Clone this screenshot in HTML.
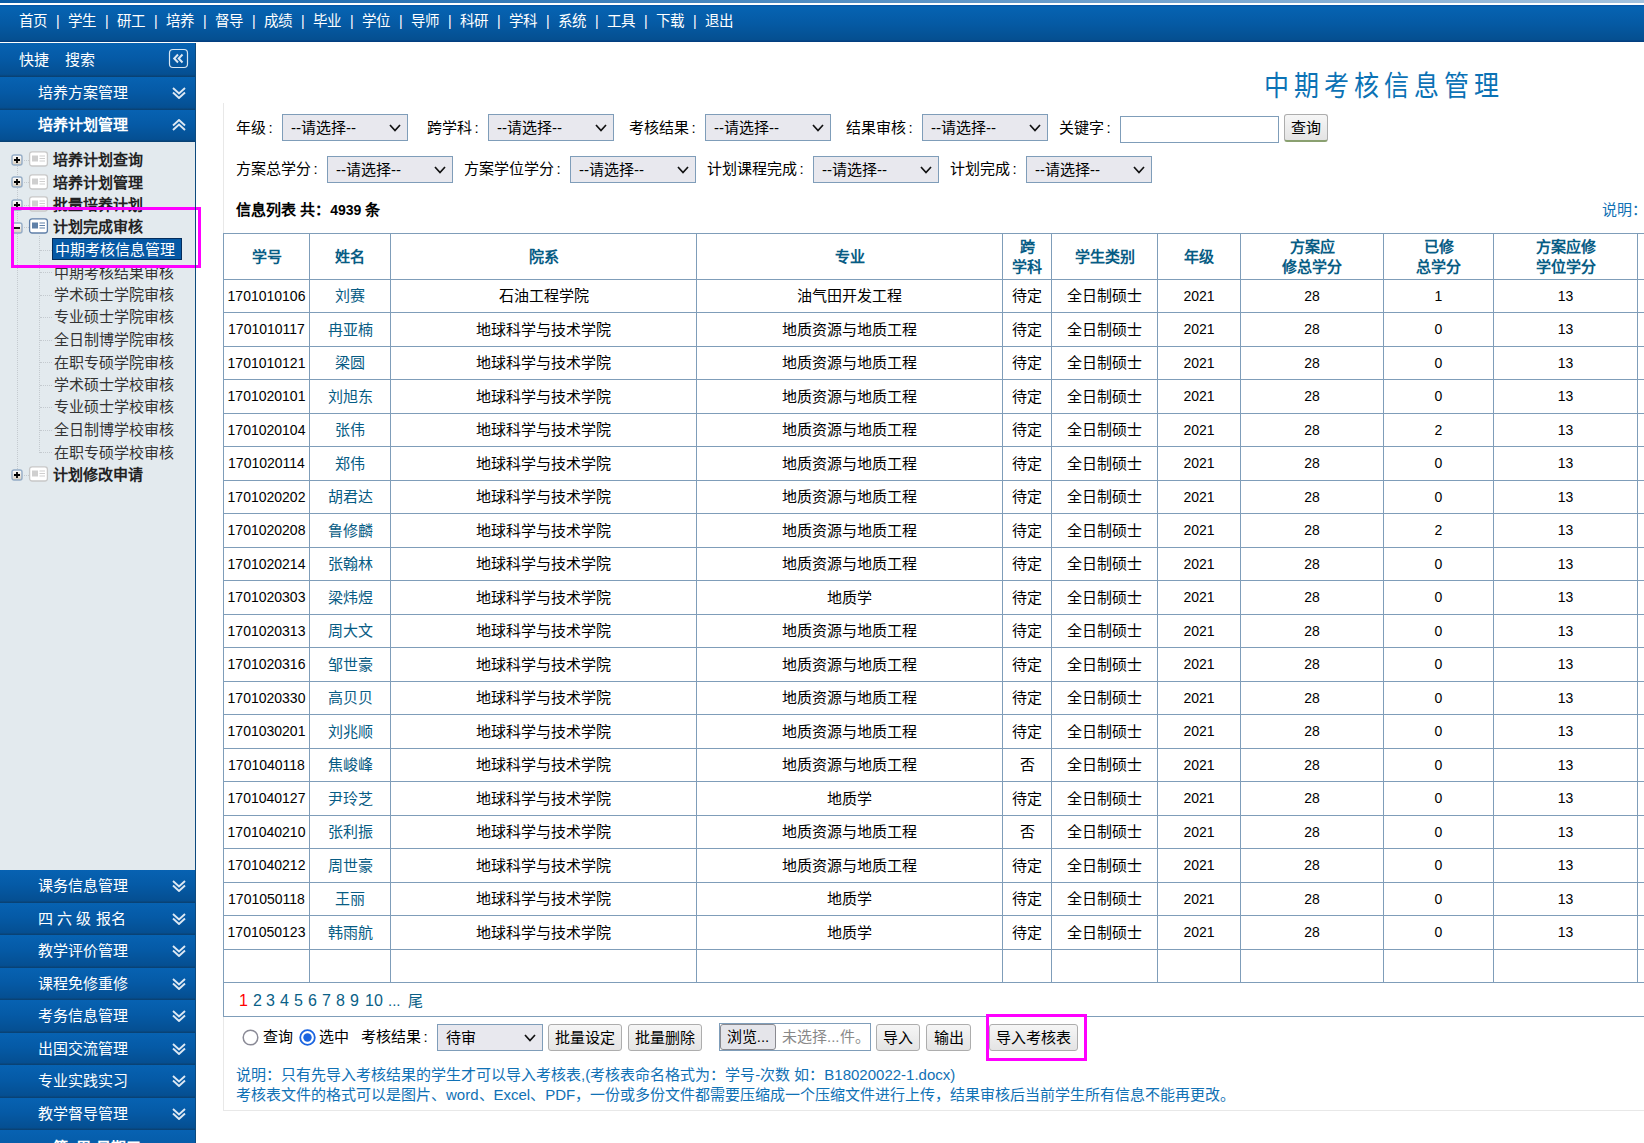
<!DOCTYPE html><html lang="zh-CN"><head><meta charset="utf-8"><title>中期考核信息管理</title><style>
*{box-sizing:border-box}
html,body{margin:0;padding:0}
body{width:1644px;height:1143px;overflow:hidden;position:relative;background:#fff;font-family:"Liberation Sans",sans-serif;font-size:14px;color:#000}
.abs{position:absolute}
#topstrip{left:0;top:0;width:1644px;height:3px;background:linear-gradient(90deg,#0a5ca6 0%,#3f82bd 40%,#7aa8d2 75%,#a3c2de 100%)}
#topwhite{left:0;top:3px;width:1644px;height:2px;background:#fff}
#topbar{left:0;top:5px;width:1644px;height:37px;background:linear-gradient(#0454a6 0,#0663b2 2px,#055aa4 50%,#054f90 35px,#033f80 36px,#033f80 37px)}
#nav{left:19px;top:4px;height:36px;line-height:34px;color:#fff;font-size:14.5px;white-space:nowrap}
#nav span.it{position:absolute;top:0}
#nav span.sep{position:absolute;top:0;font-size:14px}
.side{left:0;width:196px}
.mh{position:absolute;left:0;width:195px;background:linear-gradient(#0762b2 0%,#055aa6 45%,#054f92 92%,#0a3f6e 100%);color:#fff;font-size:15px}
.mh .t{position:absolute;left:38px;top:0;white-space:nowrap}
.chev{position:absolute;left:172px;width:14px;height:12px}
#tree{left:0;top:142px;width:195px;height:728px;background:#e3eaee}
#sideborder{left:195px;top:43px;width:1px;height:1100px;background:#0d4a7e}
.tn{position:absolute;left:53px;font-weight:bold;font-size:15px;color:#222;white-space:nowrap}
.ts{position:absolute;left:54px;font-size:15px;color:#333;white-space:nowrap}
.cell{position:absolute;text-align:center;white-space:nowrap}
.hl{position:absolute;background:#7f9db9}
.hd{color:#075c84;font-weight:bold;font-size:15px;line-height:20px}
.nm{color:#075c84;font-size:15px}
.cj{font-size:15px}
.sel{position:absolute;height:27px;background:#e8e8ee;border:1px solid #7f9db9;font-size:15px;line-height:25px;padding-left:8px;color:#000;white-space:nowrap}
.sel svg{position:absolute;right:6px;top:9px}
.lbl{position:absolute;font-size:15px;white-space:nowrap;line-height:20px}
.btn{position:absolute;height:27px;border:1px solid #adadad;border-radius:3px;background:linear-gradient(#f6f6f6,#e4e4e4);font-size:15px;line-height:25px;text-align:center;white-space:nowrap}
.mag{position:absolute;border:3px solid #f0f;}
</style></head><body>
<div class="abs" id="topstrip"></div><div class="abs" id="topwhite"></div><div class="abs" id="topbar"></div>
<div class="abs" id="nav">
<span class="it" style="left:0px">首页</span>
<span class="sep" style="left:37px">|</span>
<span class="it" style="left:49px">学生</span>
<span class="sep" style="left:86px">|</span>
<span class="it" style="left:98px">研工</span>
<span class="sep" style="left:135px">|</span>
<span class="it" style="left:147px">培养</span>
<span class="sep" style="left:184px">|</span>
<span class="it" style="left:196px">督导</span>
<span class="sep" style="left:233px">|</span>
<span class="it" style="left:245px">成绩</span>
<span class="sep" style="left:282px">|</span>
<span class="it" style="left:294px">毕业</span>
<span class="sep" style="left:331px">|</span>
<span class="it" style="left:343px">学位</span>
<span class="sep" style="left:380px">|</span>
<span class="it" style="left:392px">导师</span>
<span class="sep" style="left:429px">|</span>
<span class="it" style="left:441px">科研</span>
<span class="sep" style="left:478px">|</span>
<span class="it" style="left:490px">学科</span>
<span class="sep" style="left:527px">|</span>
<span class="it" style="left:539px">系统</span>
<span class="sep" style="left:576px">|</span>
<span class="it" style="left:588px">工具</span>
<span class="sep" style="left:625px">|</span>
<span class="it" style="left:637px">下载</span>
<span class="sep" style="left:674px">|</span>
<span class="it" style="left:686px">退出</span>
</div>
<div class="mh" style="top:43px;height:34px"><span class="t" style="left:19px;line-height:33px;font-size:15px">快捷</span><span class="t" style="left:65px;line-height:33px;font-size:15px">搜索</span><svg style="position:absolute;left:168px;top:5px" width="21" height="21" viewBox="0 0 21 21"><rect x="1.5" y="1.5" width="18" height="18" rx="3.5" fill="none" stroke="#d8e6f2" stroke-width="1.2"/><path d="M10 6.5 L6.2 10.5 L10 14.5 M14.5 6.5 L10.7 10.5 L14.5 14.5" fill="none" stroke="#dde8f3" stroke-width="2"/></svg></div>
<div class="mh" style="top:77px;height:33px"><span class="t" style="line-height:31px">培养方案管理</span><div class="chev" style="top:8px"><svg width="14" height="12" viewBox="0 0 14 12"><path d="M1 1 L7 6.5 L13 1 M1 5.5 L7 11 L13 5.5" fill="none" stroke="#dde8f3" stroke-width="1.9"/></svg></div></div>
<div class="mh" style="top:110px;height:32px"><span class="t" style="line-height:29px;font-weight:bold">培养计划管理</span><div class="chev" style="top:7px"><svg width="14" height="12" viewBox="0 0 14 12"><path d="M1 11 L7 5.5 L13 11 M1 6.5 L7 1 L13 6.5" fill="none" stroke="#dde8f3" stroke-width="1.9"/></svg></div></div>
<div class="abs" id="tree"></div>
<div class="abs" style="left:17px;top:166px;width:1px;height:303px;border-left:1px dotted #c4cacf"></div>
<div class="abs" style="left:39px;top:236px;width:1px;height:217px;border-left:1px dotted #c4cacf"></div>
<svg class="abs" style="left:11px;top:154px" width="12" height="12" viewBox="0 0 12 12"><defs><linearGradient id="pg" x1="0" y1="0" x2="0" y2="1"><stop offset="0" stop-color="#fff"/><stop offset="1" stop-color="#d8cfc0"/></linearGradient></defs><rect x="1" y="1" width="10" height="10" rx="2" fill="url(#pg)" stroke="#94acc6" stroke-width="1.4"/><path d="M3 6 H9 M6 3 V9" stroke="#000" stroke-width="1.8"/></svg>
<div class="abs" style="left:24px;top:160px;width:5px;border-top:1px dotted #c4cacf"></div>
<svg class="abs" style="left:28px;top:151px" width="21" height="16" viewBox="0 0 21 16"><rect x="1.6" y="0.8" width="17.8" height="14.2" rx="2.5" fill="#fff" stroke="#c8c8c8" stroke-width="1.3"/><rect x="4" y="4.5" width="6" height="6" fill="#cfcfcf"/><path d="M11.5 5 H17 M11.5 7.5 H17 M11.5 10 H17" stroke="#cfcfcf" stroke-width="1.1"/></svg>
<div class="tn" style="top:149px;line-height:22px">培养计划查询</div>
<svg class="abs" style="left:11px;top:176px" width="12" height="12" viewBox="0 0 12 12"><defs><linearGradient id="pg" x1="0" y1="0" x2="0" y2="1"><stop offset="0" stop-color="#fff"/><stop offset="1" stop-color="#d8cfc0"/></linearGradient></defs><rect x="1" y="1" width="10" height="10" rx="2" fill="url(#pg)" stroke="#94acc6" stroke-width="1.4"/><path d="M3 6 H9 M6 3 V9" stroke="#000" stroke-width="1.8"/></svg>
<div class="abs" style="left:24px;top:182px;width:5px;border-top:1px dotted #c4cacf"></div>
<svg class="abs" style="left:28px;top:174px" width="21" height="16" viewBox="0 0 21 16"><rect x="1.6" y="0.8" width="17.8" height="14.2" rx="2.5" fill="#fff" stroke="#c8c8c8" stroke-width="1.3"/><rect x="4" y="4.5" width="6" height="6" fill="#cfcfcf"/><path d="M11.5 5 H17 M11.5 7.5 H17 M11.5 10 H17" stroke="#cfcfcf" stroke-width="1.1"/></svg>
<div class="tn" style="top:172px;line-height:22px">培养计划管理</div>
<svg class="abs" style="left:11px;top:199px" width="12" height="12" viewBox="0 0 12 12"><defs><linearGradient id="pg" x1="0" y1="0" x2="0" y2="1"><stop offset="0" stop-color="#fff"/><stop offset="1" stop-color="#d8cfc0"/></linearGradient></defs><rect x="1" y="1" width="10" height="10" rx="2" fill="url(#pg)" stroke="#94acc6" stroke-width="1.4"/><path d="M3 6 H9 M6 3 V9" stroke="#000" stroke-width="1.8"/></svg>
<div class="abs" style="left:24px;top:205px;width:5px;border-top:1px dotted #c4cacf"></div>
<svg class="abs" style="left:28px;top:196px" width="21" height="16" viewBox="0 0 21 16"><rect x="1.6" y="0.8" width="17.8" height="14.2" rx="2.5" fill="#fff" stroke="#c8c8c8" stroke-width="1.3"/><rect x="4" y="4.5" width="6" height="6" fill="#cfcfcf"/><path d="M11.5 5 H17 M11.5 7.5 H17 M11.5 10 H17" stroke="#cfcfcf" stroke-width="1.1"/></svg>
<div class="tn" style="top:194px;line-height:22px">批量培养计划</div>
<svg class="abs" style="left:11px;top:222px" width="12" height="12" viewBox="0 0 12 12"><defs><linearGradient id="pg" x1="0" y1="0" x2="0" y2="1"><stop offset="0" stop-color="#fff"/><stop offset="1" stop-color="#d8cfc0"/></linearGradient></defs><rect x="1" y="1" width="10" height="10" rx="2" fill="url(#pg)" stroke="#94acc6" stroke-width="1.4"/><path d="M3 6 H9" stroke="#000" stroke-width="1.8"/></svg>
<div class="abs" style="left:24px;top:227px;width:5px;border-top:1px dotted #c4cacf"></div>
<svg class="abs" style="left:28px;top:218px" width="21" height="16" viewBox="0 0 21 16"><rect x="1.6" y="0.8" width="17.8" height="14.2" rx="2.5" fill="#fff" stroke="#5f7fa8" stroke-width="1.3"/><rect x="4" y="4.5" width="6" height="6" fill="#5f80a8"/><path d="M11.5 5 H17 M11.5 7.5 H17 M11.5 10 H17" stroke="#5f80a8" stroke-width="1.1"/></svg>
<div class="tn" style="top:216px;line-height:22px">计划完成审核</div>
<div class="abs" style="left:40px;top:250px;width:12px;border-top:1px dotted #c4cacf"></div>
<div class="abs" style="left:52px;top:238px;width:130px;height:22px;background:#0659a5;border:1px solid #032d5c"></div>
<div class="ts" style="top:239px;left:55px;line-height:22px;color:#fff">中期考核信息管理</div>
<div class="abs" style="left:40px;top:272px;width:12px;border-top:1px dotted #c4cacf"></div>
<div class="ts" style="top:262px;line-height:22px">中期考核结果审核</div>
<div class="abs" style="left:40px;top:295px;width:12px;border-top:1px dotted #c4cacf"></div>
<div class="ts" style="top:284px;line-height:22px">学术硕士学院审核</div>
<div class="abs" style="left:40px;top:317px;width:12px;border-top:1px dotted #c4cacf"></div>
<div class="ts" style="top:306px;line-height:22px">专业硕士学院审核</div>
<div class="abs" style="left:40px;top:340px;width:12px;border-top:1px dotted #c4cacf"></div>
<div class="ts" style="top:329px;line-height:22px">全日制博学院审核</div>
<div class="abs" style="left:40px;top:362px;width:12px;border-top:1px dotted #c4cacf"></div>
<div class="ts" style="top:352px;line-height:22px">在职专硕学院审核</div>
<div class="abs" style="left:40px;top:385px;width:12px;border-top:1px dotted #c4cacf"></div>
<div class="ts" style="top:374px;line-height:22px">学术硕士学校审核</div>
<div class="abs" style="left:40px;top:407px;width:12px;border-top:1px dotted #c4cacf"></div>
<div class="ts" style="top:396px;line-height:22px">专业硕士学校审核</div>
<div class="abs" style="left:40px;top:430px;width:12px;border-top:1px dotted #c4cacf"></div>
<div class="ts" style="top:419px;line-height:22px">全日制博学校审核</div>
<div class="abs" style="left:40px;top:452px;width:12px;border-top:1px dotted #c4cacf"></div>
<div class="ts" style="top:442px;line-height:22px">在职专硕学校审核</div>
<svg class="abs" style="left:11px;top:469px" width="12" height="12" viewBox="0 0 12 12"><defs><linearGradient id="pg" x1="0" y1="0" x2="0" y2="1"><stop offset="0" stop-color="#fff"/><stop offset="1" stop-color="#d8cfc0"/></linearGradient></defs><rect x="1" y="1" width="10" height="10" rx="2" fill="url(#pg)" stroke="#94acc6" stroke-width="1.4"/><path d="M3 6 H9 M6 3 V9" stroke="#000" stroke-width="1.8"/></svg>
<div class="abs" style="left:24px;top:475px;width:5px;border-top:1px dotted #c4cacf"></div>
<svg class="abs" style="left:28px;top:466px" width="21" height="16" viewBox="0 0 21 16"><rect x="1.6" y="0.8" width="17.8" height="14.2" rx="2.5" fill="#fff" stroke="#c8c8c8" stroke-width="1.3"/><rect x="4" y="4.5" width="6" height="6" fill="#cfcfcf"/><path d="M11.5 5 H17 M11.5 7.5 H17 M11.5 10 H17" stroke="#cfcfcf" stroke-width="1.1"/></svg>
<div class="tn" style="top:464px;line-height:22px">计划修改申请</div>
<div class="mag" style="left:11px;top:207px;width:190px;height:61px"></div>
<div class="mh" style="top:870.0px;height:32.5px"><span class="t" style="line-height:32px">课务信息管理</span><div class="chev" style="top:8px"><svg width="14" height="12" viewBox="0 0 14 12"><path d="M1 1 L7 6.5 L13 1 M1 5.5 L7 11 L13 5.5" fill="none" stroke="#dde8f3" stroke-width="1.9"/></svg></div></div>
<div class="mh" style="top:902.5px;height:32.5px"><span class="t" style="line-height:32px">四 六 级 报名</span><div class="chev" style="top:8px"><svg width="14" height="12" viewBox="0 0 14 12"><path d="M1 1 L7 6.5 L13 1 M1 5.5 L7 11 L13 5.5" fill="none" stroke="#dde8f3" stroke-width="1.9"/></svg></div></div>
<div class="mh" style="top:935.0px;height:32.5px"><span class="t" style="line-height:32px">教学评价管理</span><div class="chev" style="top:8px"><svg width="14" height="12" viewBox="0 0 14 12"><path d="M1 1 L7 6.5 L13 1 M1 5.5 L7 11 L13 5.5" fill="none" stroke="#dde8f3" stroke-width="1.9"/></svg></div></div>
<div class="mh" style="top:967.5px;height:32.5px"><span class="t" style="line-height:32px">课程免修重修</span><div class="chev" style="top:8px"><svg width="14" height="12" viewBox="0 0 14 12"><path d="M1 1 L7 6.5 L13 1 M1 5.5 L7 11 L13 5.5" fill="none" stroke="#dde8f3" stroke-width="1.9"/></svg></div></div>
<div class="mh" style="top:1000.0px;height:32.5px"><span class="t" style="line-height:32px">考务信息管理</span><div class="chev" style="top:8px"><svg width="14" height="12" viewBox="0 0 14 12"><path d="M1 1 L7 6.5 L13 1 M1 5.5 L7 11 L13 5.5" fill="none" stroke="#dde8f3" stroke-width="1.9"/></svg></div></div>
<div class="mh" style="top:1032.5px;height:32.5px"><span class="t" style="line-height:32px">出国交流管理</span><div class="chev" style="top:8px"><svg width="14" height="12" viewBox="0 0 14 12"><path d="M1 1 L7 6.5 L13 1 M1 5.5 L7 11 L13 5.5" fill="none" stroke="#dde8f3" stroke-width="1.9"/></svg></div></div>
<div class="mh" style="top:1065.0px;height:32.5px"><span class="t" style="line-height:32px">专业实践实习</span><div class="chev" style="top:8px"><svg width="14" height="12" viewBox="0 0 14 12"><path d="M1 1 L7 6.5 L13 1 M1 5.5 L7 11 L13 5.5" fill="none" stroke="#dde8f3" stroke-width="1.9"/></svg></div></div>
<div class="mh" style="top:1097.5px;height:32.5px"><span class="t" style="line-height:32px">教学督导管理</span><div class="chev" style="top:8px"><svg width="14" height="12" viewBox="0 0 14 12"><path d="M1 1 L7 6.5 L13 1 M1 5.5 L7 11 L13 5.5" fill="none" stroke="#dde8f3" stroke-width="1.9"/></svg></div></div>
<div class="mh" style="top:1130px;height:40px"><span class="t" style="left:53px;line-height:32px;top:2px;font-weight:bold">第9周 星期三</span></div>
<div class="abs" id="sideborder"></div>
<div class="abs" style="left:1264px;top:66px;font-size:25px;line-height:36px;color:#0b72b5;letter-spacing:5px;font-family:'Liberation Serif',serif;white-space:nowrap;transform:scaleY(1.14);transform-origin:0 0">中期考核信息管理</div>
<div class="abs" style="left:223px;top:103px;width:1px;height:1008px;background:#e8e8e8"></div>
<div class="abs" style="left:223px;top:1110px;width:1421px;height:1px;background:#e8e8e8"></div>
<div class="lbl" style="left:236px;top:118px">年级<span style="margin-left:2.5px">:</span></div>
<div class="sel" style="left:282px;top:114px;width:126px;height:27px">--请选择--<svg width="12" height="8" viewBox="0 0 12 8"><path d="M1 1 L6 6.5 L11 1" fill="none" stroke="#111" stroke-width="1.7"/></svg></div>
<div class="lbl" style="left:427px;top:118px">跨学科<span style="margin-left:2.5px">:</span></div>
<div class="sel" style="left:488px;top:114px;width:126px;height:27px">--请选择--<svg width="12" height="8" viewBox="0 0 12 8"><path d="M1 1 L6 6.5 L11 1" fill="none" stroke="#111" stroke-width="1.7"/></svg></div>
<div class="lbl" style="left:629px;top:118px">考核结果<span style="margin-left:2.5px">:</span></div>
<div class="sel" style="left:705px;top:114px;width:126px;height:27px">--请选择--<svg width="12" height="8" viewBox="0 0 12 8"><path d="M1 1 L6 6.5 L11 1" fill="none" stroke="#111" stroke-width="1.7"/></svg></div>
<div class="lbl" style="left:846px;top:118px">结果审核<span style="margin-left:2.5px">:</span></div>
<div class="sel" style="left:922px;top:114px;width:126px;height:27px">--请选择--<svg width="12" height="8" viewBox="0 0 12 8"><path d="M1 1 L6 6.5 L11 1" fill="none" stroke="#111" stroke-width="1.7"/></svg></div>
<div class="lbl" style="left:1059px;top:118px">关键字<span style="margin-left:2.5px">:</span></div>
<div class="abs" style="left:1120px;top:116px;width:159px;height:27px;border:1px solid #7f9db9;background:#fff"></div>
<div class="btn" style="left:1284px;top:114px;width:44px;height:28px;border-bottom:2px solid #8aa070">查询</div>
<div class="lbl" style="left:236px;top:159px">方案总学分<span style="margin-left:2.5px">:</span></div>
<div class="sel" style="left:327px;top:156px;width:126px;height:27px">--请选择--<svg width="12" height="8" viewBox="0 0 12 8"><path d="M1 1 L6 6.5 L11 1" fill="none" stroke="#111" stroke-width="1.7"/></svg></div>
<div class="lbl" style="left:464px;top:159px">方案学位学分<span style="margin-left:2.5px">:</span></div>
<div class="sel" style="left:570px;top:156px;width:126px;height:27px">--请选择--<svg width="12" height="8" viewBox="0 0 12 8"><path d="M1 1 L6 6.5 L11 1" fill="none" stroke="#111" stroke-width="1.7"/></svg></div>
<div class="lbl" style="left:707px;top:159px">计划课程完成<span style="margin-left:2.5px">:</span></div>
<div class="sel" style="left:813px;top:156px;width:126px;height:27px">--请选择--<svg width="12" height="8" viewBox="0 0 12 8"><path d="M1 1 L6 6.5 L11 1" fill="none" stroke="#111" stroke-width="1.7"/></svg></div>
<div class="lbl" style="left:950px;top:159px">计划完成<span style="margin-left:2.5px">:</span></div>
<div class="sel" style="left:1026px;top:156px;width:126px;height:27px">--请选择--<svg width="12" height="8" viewBox="0 0 12 8"><path d="M1 1 L6 6.5 L11 1" fill="none" stroke="#111" stroke-width="1.7"/></svg></div>
<div class="abs" style="left:236px;top:200px;font-weight:bold;font-size:14px;line-height:20px;white-space:nowrap"><span class="cj">信息列表 共：</span>4939 <span class="cj">条</span></div>
<div class="abs" style="left:1602px;top:200px;font-size:15px;line-height:20px;color:#1071b5;white-space:nowrap">说明：</div>
<div class="hl" style="left:223px;top:233px;width:1px;height:750px"></div>
<div class="hl" style="left:309px;top:233px;width:1px;height:750px"></div>
<div class="hl" style="left:390px;top:233px;width:1px;height:750px"></div>
<div class="hl" style="left:696px;top:233px;width:1px;height:750px"></div>
<div class="hl" style="left:1002px;top:233px;width:1px;height:750px"></div>
<div class="hl" style="left:1051px;top:233px;width:1px;height:750px"></div>
<div class="hl" style="left:1157px;top:233px;width:1px;height:750px"></div>
<div class="hl" style="left:1240px;top:233px;width:1px;height:750px"></div>
<div class="hl" style="left:1383px;top:233px;width:1px;height:750px"></div>
<div class="hl" style="left:1493px;top:233px;width:1px;height:750px"></div>
<div class="hl" style="left:1637px;top:233px;width:1px;height:750px"></div>
<div class="hl" style="left:223px;top:233px;width:1421px;height:1px"></div>
<div class="hl" style="left:223px;top:279px;width:1421px;height:1px"></div>
<div class="hl" style="left:223px;top:312px;width:1421px;height:1px"></div>
<div class="hl" style="left:223px;top:346px;width:1421px;height:1px"></div>
<div class="hl" style="left:223px;top:379px;width:1421px;height:1px"></div>
<div class="hl" style="left:223px;top:413px;width:1421px;height:1px"></div>
<div class="hl" style="left:223px;top:446px;width:1421px;height:1px"></div>
<div class="hl" style="left:223px;top:480px;width:1421px;height:1px"></div>
<div class="hl" style="left:223px;top:513px;width:1421px;height:1px"></div>
<div class="hl" style="left:223px;top:547px;width:1421px;height:1px"></div>
<div class="hl" style="left:223px;top:580px;width:1421px;height:1px"></div>
<div class="hl" style="left:223px;top:614px;width:1421px;height:1px"></div>
<div class="hl" style="left:223px;top:647px;width:1421px;height:1px"></div>
<div class="hl" style="left:223px;top:681px;width:1421px;height:1px"></div>
<div class="hl" style="left:223px;top:714px;width:1421px;height:1px"></div>
<div class="hl" style="left:223px;top:748px;width:1421px;height:1px"></div>
<div class="hl" style="left:223px;top:781px;width:1421px;height:1px"></div>
<div class="hl" style="left:223px;top:815px;width:1421px;height:1px"></div>
<div class="hl" style="left:223px;top:848px;width:1421px;height:1px"></div>
<div class="hl" style="left:223px;top:882px;width:1421px;height:1px"></div>
<div class="hl" style="left:223px;top:915px;width:1421px;height:1px"></div>
<div class="hl" style="left:223px;top:949px;width:1421px;height:1px"></div>
<div class="hl" style="left:223px;top:982px;width:1421px;height:1px"></div>
<div class="hl" style="left:223px;top:1016px;width:1421px;height:1px"></div>
<div class="hl" style="left:223px;top:982px;width:1px;height:34px"></div>
<div class="cell hd" style="left:224px;top:234px;width:85px;height:45px;display:flex;align-items:center;justify-content:center"><div>学号</div></div>
<div class="cell hd" style="left:310px;top:234px;width:80px;height:45px;display:flex;align-items:center;justify-content:center"><div>姓名</div></div>
<div class="cell hd" style="left:391px;top:234px;width:305px;height:45px;display:flex;align-items:center;justify-content:center"><div>院系</div></div>
<div class="cell hd" style="left:697px;top:234px;width:305px;height:45px;display:flex;align-items:center;justify-content:center"><div>专业</div></div>
<div class="cell hd" style="left:1003px;top:234px;width:48px;height:45px;display:flex;align-items:center;justify-content:center"><div>跨<br>学科</div></div>
<div class="cell hd" style="left:1052px;top:234px;width:105px;height:45px;display:flex;align-items:center;justify-content:center"><div>学生类别</div></div>
<div class="cell hd" style="left:1158px;top:234px;width:82px;height:45px;display:flex;align-items:center;justify-content:center"><div>年级</div></div>
<div class="cell hd" style="left:1241px;top:234px;width:142px;height:45px;display:flex;align-items:center;justify-content:center"><div>方案应<br>修总学分</div></div>
<div class="cell hd" style="left:1384px;top:234px;width:109px;height:45px;display:flex;align-items:center;justify-content:center"><div>已修<br>总学分</div></div>
<div class="cell hd" style="left:1494px;top:234px;width:143px;height:45px;display:flex;align-items:center;justify-content:center"><div>方案应修<br>学位学分</div></div>
<div class="cell" style="left:224px;top:280px;width:85px;height:32px;line-height:32px">1701010106</div>
<div class="cell nm" style="left:310px;top:280px;width:80px;height:32px;line-height:32px">刘赛</div>
<div class="cell cj" style="left:391px;top:280px;width:305px;height:32px;line-height:32px">石油工程学院</div>
<div class="cell cj" style="left:697px;top:280px;width:305px;height:32px;line-height:32px">油气田开发工程</div>
<div class="cell cj" style="left:1003px;top:280px;width:48px;height:32px;line-height:32px">待定</div>
<div class="cell cj" style="left:1052px;top:280px;width:105px;height:32px;line-height:32px">全日制硕士</div>
<div class="cell" style="left:1158px;top:280px;width:82px;height:32px;line-height:32px">2021</div>
<div class="cell" style="left:1241px;top:280px;width:142px;height:32px;line-height:32px">28</div>
<div class="cell" style="left:1384px;top:280px;width:109px;height:32px;line-height:32px">1</div>
<div class="cell" style="left:1494px;top:280px;width:143px;height:32px;line-height:32px">13</div>
<div class="cell" style="left:224px;top:313px;width:85px;height:33px;line-height:33px">1701010117</div>
<div class="cell nm" style="left:310px;top:313px;width:80px;height:33px;line-height:33px">冉亚楠</div>
<div class="cell cj" style="left:391px;top:313px;width:305px;height:33px;line-height:33px">地球科学与技术学院</div>
<div class="cell cj" style="left:697px;top:313px;width:305px;height:33px;line-height:33px">地质资源与地质工程</div>
<div class="cell cj" style="left:1003px;top:313px;width:48px;height:33px;line-height:33px">待定</div>
<div class="cell cj" style="left:1052px;top:313px;width:105px;height:33px;line-height:33px">全日制硕士</div>
<div class="cell" style="left:1158px;top:313px;width:82px;height:33px;line-height:33px">2021</div>
<div class="cell" style="left:1241px;top:313px;width:142px;height:33px;line-height:33px">28</div>
<div class="cell" style="left:1384px;top:313px;width:109px;height:33px;line-height:33px">0</div>
<div class="cell" style="left:1494px;top:313px;width:143px;height:33px;line-height:33px">13</div>
<div class="cell" style="left:224px;top:347px;width:85px;height:32px;line-height:32px">1701010121</div>
<div class="cell nm" style="left:310px;top:347px;width:80px;height:32px;line-height:32px">梁圆</div>
<div class="cell cj" style="left:391px;top:347px;width:305px;height:32px;line-height:32px">地球科学与技术学院</div>
<div class="cell cj" style="left:697px;top:347px;width:305px;height:32px;line-height:32px">地质资源与地质工程</div>
<div class="cell cj" style="left:1003px;top:347px;width:48px;height:32px;line-height:32px">待定</div>
<div class="cell cj" style="left:1052px;top:347px;width:105px;height:32px;line-height:32px">全日制硕士</div>
<div class="cell" style="left:1158px;top:347px;width:82px;height:32px;line-height:32px">2021</div>
<div class="cell" style="left:1241px;top:347px;width:142px;height:32px;line-height:32px">28</div>
<div class="cell" style="left:1384px;top:347px;width:109px;height:32px;line-height:32px">0</div>
<div class="cell" style="left:1494px;top:347px;width:143px;height:32px;line-height:32px">13</div>
<div class="cell" style="left:224px;top:380px;width:85px;height:33px;line-height:33px">1701020101</div>
<div class="cell nm" style="left:310px;top:380px;width:80px;height:33px;line-height:33px">刘旭东</div>
<div class="cell cj" style="left:391px;top:380px;width:305px;height:33px;line-height:33px">地球科学与技术学院</div>
<div class="cell cj" style="left:697px;top:380px;width:305px;height:33px;line-height:33px">地质资源与地质工程</div>
<div class="cell cj" style="left:1003px;top:380px;width:48px;height:33px;line-height:33px">待定</div>
<div class="cell cj" style="left:1052px;top:380px;width:105px;height:33px;line-height:33px">全日制硕士</div>
<div class="cell" style="left:1158px;top:380px;width:82px;height:33px;line-height:33px">2021</div>
<div class="cell" style="left:1241px;top:380px;width:142px;height:33px;line-height:33px">28</div>
<div class="cell" style="left:1384px;top:380px;width:109px;height:33px;line-height:33px">0</div>
<div class="cell" style="left:1494px;top:380px;width:143px;height:33px;line-height:33px">13</div>
<div class="cell" style="left:224px;top:414px;width:85px;height:32px;line-height:32px">1701020104</div>
<div class="cell nm" style="left:310px;top:414px;width:80px;height:32px;line-height:32px">张伟</div>
<div class="cell cj" style="left:391px;top:414px;width:305px;height:32px;line-height:32px">地球科学与技术学院</div>
<div class="cell cj" style="left:697px;top:414px;width:305px;height:32px;line-height:32px">地质资源与地质工程</div>
<div class="cell cj" style="left:1003px;top:414px;width:48px;height:32px;line-height:32px">待定</div>
<div class="cell cj" style="left:1052px;top:414px;width:105px;height:32px;line-height:32px">全日制硕士</div>
<div class="cell" style="left:1158px;top:414px;width:82px;height:32px;line-height:32px">2021</div>
<div class="cell" style="left:1241px;top:414px;width:142px;height:32px;line-height:32px">28</div>
<div class="cell" style="left:1384px;top:414px;width:109px;height:32px;line-height:32px">2</div>
<div class="cell" style="left:1494px;top:414px;width:143px;height:32px;line-height:32px">13</div>
<div class="cell" style="left:224px;top:447px;width:85px;height:33px;line-height:33px">1701020114</div>
<div class="cell nm" style="left:310px;top:447px;width:80px;height:33px;line-height:33px">郑伟</div>
<div class="cell cj" style="left:391px;top:447px;width:305px;height:33px;line-height:33px">地球科学与技术学院</div>
<div class="cell cj" style="left:697px;top:447px;width:305px;height:33px;line-height:33px">地质资源与地质工程</div>
<div class="cell cj" style="left:1003px;top:447px;width:48px;height:33px;line-height:33px">待定</div>
<div class="cell cj" style="left:1052px;top:447px;width:105px;height:33px;line-height:33px">全日制硕士</div>
<div class="cell" style="left:1158px;top:447px;width:82px;height:33px;line-height:33px">2021</div>
<div class="cell" style="left:1241px;top:447px;width:142px;height:33px;line-height:33px">28</div>
<div class="cell" style="left:1384px;top:447px;width:109px;height:33px;line-height:33px">0</div>
<div class="cell" style="left:1494px;top:447px;width:143px;height:33px;line-height:33px">13</div>
<div class="cell" style="left:224px;top:481px;width:85px;height:32px;line-height:32px">1701020202</div>
<div class="cell nm" style="left:310px;top:481px;width:80px;height:32px;line-height:32px">胡君达</div>
<div class="cell cj" style="left:391px;top:481px;width:305px;height:32px;line-height:32px">地球科学与技术学院</div>
<div class="cell cj" style="left:697px;top:481px;width:305px;height:32px;line-height:32px">地质资源与地质工程</div>
<div class="cell cj" style="left:1003px;top:481px;width:48px;height:32px;line-height:32px">待定</div>
<div class="cell cj" style="left:1052px;top:481px;width:105px;height:32px;line-height:32px">全日制硕士</div>
<div class="cell" style="left:1158px;top:481px;width:82px;height:32px;line-height:32px">2021</div>
<div class="cell" style="left:1241px;top:481px;width:142px;height:32px;line-height:32px">28</div>
<div class="cell" style="left:1384px;top:481px;width:109px;height:32px;line-height:32px">0</div>
<div class="cell" style="left:1494px;top:481px;width:143px;height:32px;line-height:32px">13</div>
<div class="cell" style="left:224px;top:514px;width:85px;height:33px;line-height:33px">1701020208</div>
<div class="cell nm" style="left:310px;top:514px;width:80px;height:33px;line-height:33px">鲁修麟</div>
<div class="cell cj" style="left:391px;top:514px;width:305px;height:33px;line-height:33px">地球科学与技术学院</div>
<div class="cell cj" style="left:697px;top:514px;width:305px;height:33px;line-height:33px">地质资源与地质工程</div>
<div class="cell cj" style="left:1003px;top:514px;width:48px;height:33px;line-height:33px">待定</div>
<div class="cell cj" style="left:1052px;top:514px;width:105px;height:33px;line-height:33px">全日制硕士</div>
<div class="cell" style="left:1158px;top:514px;width:82px;height:33px;line-height:33px">2021</div>
<div class="cell" style="left:1241px;top:514px;width:142px;height:33px;line-height:33px">28</div>
<div class="cell" style="left:1384px;top:514px;width:109px;height:33px;line-height:33px">2</div>
<div class="cell" style="left:1494px;top:514px;width:143px;height:33px;line-height:33px">13</div>
<div class="cell" style="left:224px;top:548px;width:85px;height:32px;line-height:32px">1701020214</div>
<div class="cell nm" style="left:310px;top:548px;width:80px;height:32px;line-height:32px">张翰林</div>
<div class="cell cj" style="left:391px;top:548px;width:305px;height:32px;line-height:32px">地球科学与技术学院</div>
<div class="cell cj" style="left:697px;top:548px;width:305px;height:32px;line-height:32px">地质资源与地质工程</div>
<div class="cell cj" style="left:1003px;top:548px;width:48px;height:32px;line-height:32px">待定</div>
<div class="cell cj" style="left:1052px;top:548px;width:105px;height:32px;line-height:32px">全日制硕士</div>
<div class="cell" style="left:1158px;top:548px;width:82px;height:32px;line-height:32px">2021</div>
<div class="cell" style="left:1241px;top:548px;width:142px;height:32px;line-height:32px">28</div>
<div class="cell" style="left:1384px;top:548px;width:109px;height:32px;line-height:32px">0</div>
<div class="cell" style="left:1494px;top:548px;width:143px;height:32px;line-height:32px">13</div>
<div class="cell" style="left:224px;top:581px;width:85px;height:33px;line-height:33px">1701020303</div>
<div class="cell nm" style="left:310px;top:581px;width:80px;height:33px;line-height:33px">梁炜煜</div>
<div class="cell cj" style="left:391px;top:581px;width:305px;height:33px;line-height:33px">地球科学与技术学院</div>
<div class="cell cj" style="left:697px;top:581px;width:305px;height:33px;line-height:33px">地质学</div>
<div class="cell cj" style="left:1003px;top:581px;width:48px;height:33px;line-height:33px">待定</div>
<div class="cell cj" style="left:1052px;top:581px;width:105px;height:33px;line-height:33px">全日制硕士</div>
<div class="cell" style="left:1158px;top:581px;width:82px;height:33px;line-height:33px">2021</div>
<div class="cell" style="left:1241px;top:581px;width:142px;height:33px;line-height:33px">28</div>
<div class="cell" style="left:1384px;top:581px;width:109px;height:33px;line-height:33px">0</div>
<div class="cell" style="left:1494px;top:581px;width:143px;height:33px;line-height:33px">13</div>
<div class="cell" style="left:224px;top:615px;width:85px;height:32px;line-height:32px">1701020313</div>
<div class="cell nm" style="left:310px;top:615px;width:80px;height:32px;line-height:32px">周大文</div>
<div class="cell cj" style="left:391px;top:615px;width:305px;height:32px;line-height:32px">地球科学与技术学院</div>
<div class="cell cj" style="left:697px;top:615px;width:305px;height:32px;line-height:32px">地质资源与地质工程</div>
<div class="cell cj" style="left:1003px;top:615px;width:48px;height:32px;line-height:32px">待定</div>
<div class="cell cj" style="left:1052px;top:615px;width:105px;height:32px;line-height:32px">全日制硕士</div>
<div class="cell" style="left:1158px;top:615px;width:82px;height:32px;line-height:32px">2021</div>
<div class="cell" style="left:1241px;top:615px;width:142px;height:32px;line-height:32px">28</div>
<div class="cell" style="left:1384px;top:615px;width:109px;height:32px;line-height:32px">0</div>
<div class="cell" style="left:1494px;top:615px;width:143px;height:32px;line-height:32px">13</div>
<div class="cell" style="left:224px;top:648px;width:85px;height:33px;line-height:33px">1701020316</div>
<div class="cell nm" style="left:310px;top:648px;width:80px;height:33px;line-height:33px">邹世豪</div>
<div class="cell cj" style="left:391px;top:648px;width:305px;height:33px;line-height:33px">地球科学与技术学院</div>
<div class="cell cj" style="left:697px;top:648px;width:305px;height:33px;line-height:33px">地质资源与地质工程</div>
<div class="cell cj" style="left:1003px;top:648px;width:48px;height:33px;line-height:33px">待定</div>
<div class="cell cj" style="left:1052px;top:648px;width:105px;height:33px;line-height:33px">全日制硕士</div>
<div class="cell" style="left:1158px;top:648px;width:82px;height:33px;line-height:33px">2021</div>
<div class="cell" style="left:1241px;top:648px;width:142px;height:33px;line-height:33px">28</div>
<div class="cell" style="left:1384px;top:648px;width:109px;height:33px;line-height:33px">0</div>
<div class="cell" style="left:1494px;top:648px;width:143px;height:33px;line-height:33px">13</div>
<div class="cell" style="left:224px;top:682px;width:85px;height:32px;line-height:32px">1701020330</div>
<div class="cell nm" style="left:310px;top:682px;width:80px;height:32px;line-height:32px">高贝贝</div>
<div class="cell cj" style="left:391px;top:682px;width:305px;height:32px;line-height:32px">地球科学与技术学院</div>
<div class="cell cj" style="left:697px;top:682px;width:305px;height:32px;line-height:32px">地质资源与地质工程</div>
<div class="cell cj" style="left:1003px;top:682px;width:48px;height:32px;line-height:32px">待定</div>
<div class="cell cj" style="left:1052px;top:682px;width:105px;height:32px;line-height:32px">全日制硕士</div>
<div class="cell" style="left:1158px;top:682px;width:82px;height:32px;line-height:32px">2021</div>
<div class="cell" style="left:1241px;top:682px;width:142px;height:32px;line-height:32px">28</div>
<div class="cell" style="left:1384px;top:682px;width:109px;height:32px;line-height:32px">0</div>
<div class="cell" style="left:1494px;top:682px;width:143px;height:32px;line-height:32px">13</div>
<div class="cell" style="left:224px;top:715px;width:85px;height:33px;line-height:33px">1701030201</div>
<div class="cell nm" style="left:310px;top:715px;width:80px;height:33px;line-height:33px">刘兆顺</div>
<div class="cell cj" style="left:391px;top:715px;width:305px;height:33px;line-height:33px">地球科学与技术学院</div>
<div class="cell cj" style="left:697px;top:715px;width:305px;height:33px;line-height:33px">地质资源与地质工程</div>
<div class="cell cj" style="left:1003px;top:715px;width:48px;height:33px;line-height:33px">待定</div>
<div class="cell cj" style="left:1052px;top:715px;width:105px;height:33px;line-height:33px">全日制硕士</div>
<div class="cell" style="left:1158px;top:715px;width:82px;height:33px;line-height:33px">2021</div>
<div class="cell" style="left:1241px;top:715px;width:142px;height:33px;line-height:33px">28</div>
<div class="cell" style="left:1384px;top:715px;width:109px;height:33px;line-height:33px">0</div>
<div class="cell" style="left:1494px;top:715px;width:143px;height:33px;line-height:33px">13</div>
<div class="cell" style="left:224px;top:749px;width:85px;height:32px;line-height:32px">1701040118</div>
<div class="cell nm" style="left:310px;top:749px;width:80px;height:32px;line-height:32px">焦峻峰</div>
<div class="cell cj" style="left:391px;top:749px;width:305px;height:32px;line-height:32px">地球科学与技术学院</div>
<div class="cell cj" style="left:697px;top:749px;width:305px;height:32px;line-height:32px">地质资源与地质工程</div>
<div class="cell cj" style="left:1003px;top:749px;width:48px;height:32px;line-height:32px">否</div>
<div class="cell cj" style="left:1052px;top:749px;width:105px;height:32px;line-height:32px">全日制硕士</div>
<div class="cell" style="left:1158px;top:749px;width:82px;height:32px;line-height:32px">2021</div>
<div class="cell" style="left:1241px;top:749px;width:142px;height:32px;line-height:32px">28</div>
<div class="cell" style="left:1384px;top:749px;width:109px;height:32px;line-height:32px">0</div>
<div class="cell" style="left:1494px;top:749px;width:143px;height:32px;line-height:32px">13</div>
<div class="cell" style="left:224px;top:782px;width:85px;height:33px;line-height:33px">1701040127</div>
<div class="cell nm" style="left:310px;top:782px;width:80px;height:33px;line-height:33px">尹玲芝</div>
<div class="cell cj" style="left:391px;top:782px;width:305px;height:33px;line-height:33px">地球科学与技术学院</div>
<div class="cell cj" style="left:697px;top:782px;width:305px;height:33px;line-height:33px">地质学</div>
<div class="cell cj" style="left:1003px;top:782px;width:48px;height:33px;line-height:33px">待定</div>
<div class="cell cj" style="left:1052px;top:782px;width:105px;height:33px;line-height:33px">全日制硕士</div>
<div class="cell" style="left:1158px;top:782px;width:82px;height:33px;line-height:33px">2021</div>
<div class="cell" style="left:1241px;top:782px;width:142px;height:33px;line-height:33px">28</div>
<div class="cell" style="left:1384px;top:782px;width:109px;height:33px;line-height:33px">0</div>
<div class="cell" style="left:1494px;top:782px;width:143px;height:33px;line-height:33px">13</div>
<div class="cell" style="left:224px;top:816px;width:85px;height:32px;line-height:32px">1701040210</div>
<div class="cell nm" style="left:310px;top:816px;width:80px;height:32px;line-height:32px">张利振</div>
<div class="cell cj" style="left:391px;top:816px;width:305px;height:32px;line-height:32px">地球科学与技术学院</div>
<div class="cell cj" style="left:697px;top:816px;width:305px;height:32px;line-height:32px">地质资源与地质工程</div>
<div class="cell cj" style="left:1003px;top:816px;width:48px;height:32px;line-height:32px">否</div>
<div class="cell cj" style="left:1052px;top:816px;width:105px;height:32px;line-height:32px">全日制硕士</div>
<div class="cell" style="left:1158px;top:816px;width:82px;height:32px;line-height:32px">2021</div>
<div class="cell" style="left:1241px;top:816px;width:142px;height:32px;line-height:32px">28</div>
<div class="cell" style="left:1384px;top:816px;width:109px;height:32px;line-height:32px">0</div>
<div class="cell" style="left:1494px;top:816px;width:143px;height:32px;line-height:32px">13</div>
<div class="cell" style="left:224px;top:849px;width:85px;height:33px;line-height:33px">1701040212</div>
<div class="cell nm" style="left:310px;top:849px;width:80px;height:33px;line-height:33px">周世豪</div>
<div class="cell cj" style="left:391px;top:849px;width:305px;height:33px;line-height:33px">地球科学与技术学院</div>
<div class="cell cj" style="left:697px;top:849px;width:305px;height:33px;line-height:33px">地质资源与地质工程</div>
<div class="cell cj" style="left:1003px;top:849px;width:48px;height:33px;line-height:33px">待定</div>
<div class="cell cj" style="left:1052px;top:849px;width:105px;height:33px;line-height:33px">全日制硕士</div>
<div class="cell" style="left:1158px;top:849px;width:82px;height:33px;line-height:33px">2021</div>
<div class="cell" style="left:1241px;top:849px;width:142px;height:33px;line-height:33px">28</div>
<div class="cell" style="left:1384px;top:849px;width:109px;height:33px;line-height:33px">0</div>
<div class="cell" style="left:1494px;top:849px;width:143px;height:33px;line-height:33px">13</div>
<div class="cell" style="left:224px;top:883px;width:85px;height:32px;line-height:32px">1701050118</div>
<div class="cell nm" style="left:310px;top:883px;width:80px;height:32px;line-height:32px">王丽</div>
<div class="cell cj" style="left:391px;top:883px;width:305px;height:32px;line-height:32px">地球科学与技术学院</div>
<div class="cell cj" style="left:697px;top:883px;width:305px;height:32px;line-height:32px">地质学</div>
<div class="cell cj" style="left:1003px;top:883px;width:48px;height:32px;line-height:32px">待定</div>
<div class="cell cj" style="left:1052px;top:883px;width:105px;height:32px;line-height:32px">全日制硕士</div>
<div class="cell" style="left:1158px;top:883px;width:82px;height:32px;line-height:32px">2021</div>
<div class="cell" style="left:1241px;top:883px;width:142px;height:32px;line-height:32px">28</div>
<div class="cell" style="left:1384px;top:883px;width:109px;height:32px;line-height:32px">0</div>
<div class="cell" style="left:1494px;top:883px;width:143px;height:32px;line-height:32px">13</div>
<div class="cell" style="left:224px;top:916px;width:85px;height:33px;line-height:33px">1701050123</div>
<div class="cell nm" style="left:310px;top:916px;width:80px;height:33px;line-height:33px">韩雨航</div>
<div class="cell cj" style="left:391px;top:916px;width:305px;height:33px;line-height:33px">地球科学与技术学院</div>
<div class="cell cj" style="left:697px;top:916px;width:305px;height:33px;line-height:33px">地质学</div>
<div class="cell cj" style="left:1003px;top:916px;width:48px;height:33px;line-height:33px">待定</div>
<div class="cell cj" style="left:1052px;top:916px;width:105px;height:33px;line-height:33px">全日制硕士</div>
<div class="cell" style="left:1158px;top:916px;width:82px;height:33px;line-height:33px">2021</div>
<div class="cell" style="left:1241px;top:916px;width:142px;height:33px;line-height:33px">28</div>
<div class="cell" style="left:1384px;top:916px;width:109px;height:33px;line-height:33px">0</div>
<div class="cell" style="left:1494px;top:916px;width:143px;height:33px;line-height:33px">13</div>
<div class="abs" style="left:239px;top:984px;line-height:33px;height:33px;color:#0a5f87;font-size:16px;white-space:nowrap">
<span class="abs" style="left:0px;color:#f00">1</span>
<span class="abs" style="left:14px;color:#0a5f87">2</span>
<span class="abs" style="left:27px;color:#0a5f87">3</span>
<span class="abs" style="left:41px;color:#0a5f87">4</span>
<span class="abs" style="left:55px;color:#0a5f87">5</span>
<span class="abs" style="left:69px;color:#0a5f87">6</span>
<span class="abs" style="left:83px;color:#0a5f87">7</span>
<span class="abs" style="left:97px;color:#0a5f87">8</span>
<span class="abs" style="left:111px;color:#0a5f87">9</span>
<span class="abs" style="left:126px;color:#0a5f87">10</span>
<span class="abs" style="left:149px;font-size:15px">...</span><span class="abs" style="left:169px;font-size:15px">尾</span></div>
<svg class="abs" style="left:242px;top:1029px" width="17" height="17" viewBox="0 0 17 17"><circle cx="8.5" cy="8.5" r="7.3" fill="#fff" stroke="#8a8a96" stroke-width="1.5"/></svg>
<div class="lbl" style="left:263px;top:1027px">查询</div>
<svg class="abs" style="left:299px;top:1029px" width="17" height="17" viewBox="0 0 17 17"><circle cx="8.5" cy="8.5" r="7.3" fill="#fff" stroke="#1a64e0" stroke-width="1.8"/><circle cx="8.5" cy="8.5" r="4.2" fill="#1a64e0"/></svg>
<div class="lbl" style="left:319px;top:1027px">选中</div>
<div class="lbl" style="left:361px;top:1027px">考核结果<span style="margin-left:2.5px">:</span></div>
<div class="sel" style="left:437px;top:1024px;width:106px;height:27px">待审<svg width="12" height="8" viewBox="0 0 12 8"><path d="M1 1 L6 6.5 L11 1" fill="none" stroke="#111" stroke-width="1.7"/></svg></div>
<div class="btn" style="left:548px;top:1024px;width:74px">批量设定</div>
<div class="btn" style="left:628px;top:1024px;width:74px">批量删除</div>
<div class="abs" style="left:719px;top:1023px;width:152px;height:28px;border:1px solid #7f9db9;background:#fff"></div>
<div class="btn" style="left:720px;top:1024px;width:56px;height:26px;background:#e5e5ea;border-color:#8a8a90;line-height:24px">浏览...</div>
<div class="lbl" style="left:782px;top:1027px;color:#888">未选择...件。</div>
<div class="btn" style="left:876px;top:1024px;width:44px">导入</div>
<div class="btn" style="left:926px;top:1024px;width:45px">输出</div>
<div class="btn" style="left:989px;top:1024px;width:89px">导入考核表</div>
<div class="mag" style="left:986px;top:1014px;width:101px;height:47px"></div>
<div class="abs" style="left:236px;top:1065px;color:#1071b5;font-size:15px;line-height:20px;white-space:nowrap">说明：只有先导入考核结果的学生才可以导入考核表,(考核表命名格式为：学号-次数 如：B18020022-1.docx)<br>考核表文件的格式可以是图片、word、Excel、PDF，一份或多份文件都需要压缩成一个压缩文件进行上传，结果审核后当前学生所有信息不能再更改。</div>
</body></html>
